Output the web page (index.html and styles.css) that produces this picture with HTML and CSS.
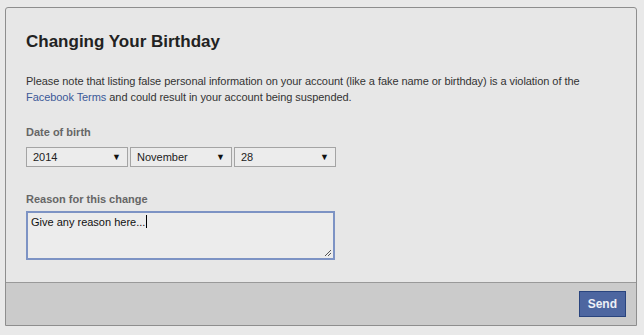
FILE: index.html
```html
<!DOCTYPE html>
<html lang="en">
<head>
    <meta charset="UTF-8">
    <meta name="viewport" content="width=device-width, initial-scale=1.0">
    <title>Changing Your Birthday</title>
    <link rel="stylesheet" href="styles.css">
</head>
<body>
    <div class="dialog">
        <div class="dialog_body">
            <h2 class="title">Changing Your Birthday</h2>
            <p class="note">Please note that listing false personal information on your account (like a fake name or birthday) is a violation of the <a href="#">Facebook Terms</a> and could result in your account being suspended.</p>

            <div class="label">Date of birth</div>
            <div class="selects">
                <div class="select year">2014<span class="arrow">&#9660;</span></div>
                <div class="select">November<span class="arrow">&#9660;</span></div>
                <div class="select">28<span class="arrow">&#9660;</span></div>
            </div>

            <div class="label reason_label">Reason for this change</div>
            <div class="textarea">Give any reason here...<span class="caret"></span>
                <svg class="grip" width="8" height="8" viewBox="0 0 8 8">
                    <path d="M7 1L1 7M7 4L4 7" stroke="#555" stroke-width="1"/>
                </svg>
            </div>
        </div>
        <div class="dialog_footer">
            <button class="send">Send</button>
        </div>
    </div>
</body>
</html>
```

FILE: styles.css
```css
body {
    font-family: "Liberation Sans", Arial, sans-serif;
    margin: 0;
    padding: 7px 7px 9px 5px;
    background-color: #e9e9e9;
    color: #333;
}
.dialog {
    border: 1px solid #8e8e8e;
    border-radius: 3px 3px 0 0;
    background-color: #e7e7e7;
    height: 319px;
    box-sizing: border-box;
    display: flex;
    flex-direction: column;
}
.dialog_body {
    flex: 1;
    padding: 23px 20px 0 20px;
}
.title {
    font-size: 17px;
    font-weight: bold;
    color: #222;
    margin: 0 0 20px 0;
    line-height: 22px;
}
.note {
    font-size: 11px;
    line-height: 16px;
    letter-spacing: -0.06px;
    margin: 0 0 20px 0;
}
.note a {
    color: #3b5998;
    text-decoration: none;
}
.label {
    font-size: 11px;
    font-weight: bold;
    color: #666;
    line-height: 14px;
    margin-bottom: 8px;
}
.reason_label {
    margin-top: 25px;
    margin-bottom: 5px;
}
.selects {
    display: flex;
    gap: 2px;
}
.select {
    width: 102px;
    height: 20px;
    box-sizing: border-box;
    border: 1px solid #a4a4a4;
    background-color: #ececec;
    font-size: 11px;
    line-height: 18px;
    padding: 0 6px;
    display: flex;
    justify-content: space-between;
    color: #222;
}
.arrow {
    font-size: 9px;
    color: #111;
}
.textarea {
    position: relative;
    width: 309px;
    height: 49px;
    box-sizing: border-box;
    border: 2px solid #7d93c4;
    background-color: #ececec;
    font-size: 11px;
    line-height: 14px;
    padding: 2px 3px;
    color: #111;
}
.caret {
    display: inline-block;
    width: 1px;
    height: 13px;
    background-color: #000;
    vertical-align: -2px;
    margin-left: 1px;
}
.grip {
    position: absolute;
    right: 1px;
    bottom: 1px;
}
.dialog_footer {
    height: 42px;
    border-top: 1px solid #999;
    background-color: #cbcbcb;
    display: flex;
    justify-content: flex-end;
    align-items: center;
    padding-right: 10px;
}
.send {
    font-family: "Liberation Sans", Arial, sans-serif;
    font-size: 12px;
    font-weight: bold;
    color: #eef0f6;
    background-color: #4d66a0;
    border: 1px solid #29447e;
    padding: 0 8px;
    height: 26px;
}
```
